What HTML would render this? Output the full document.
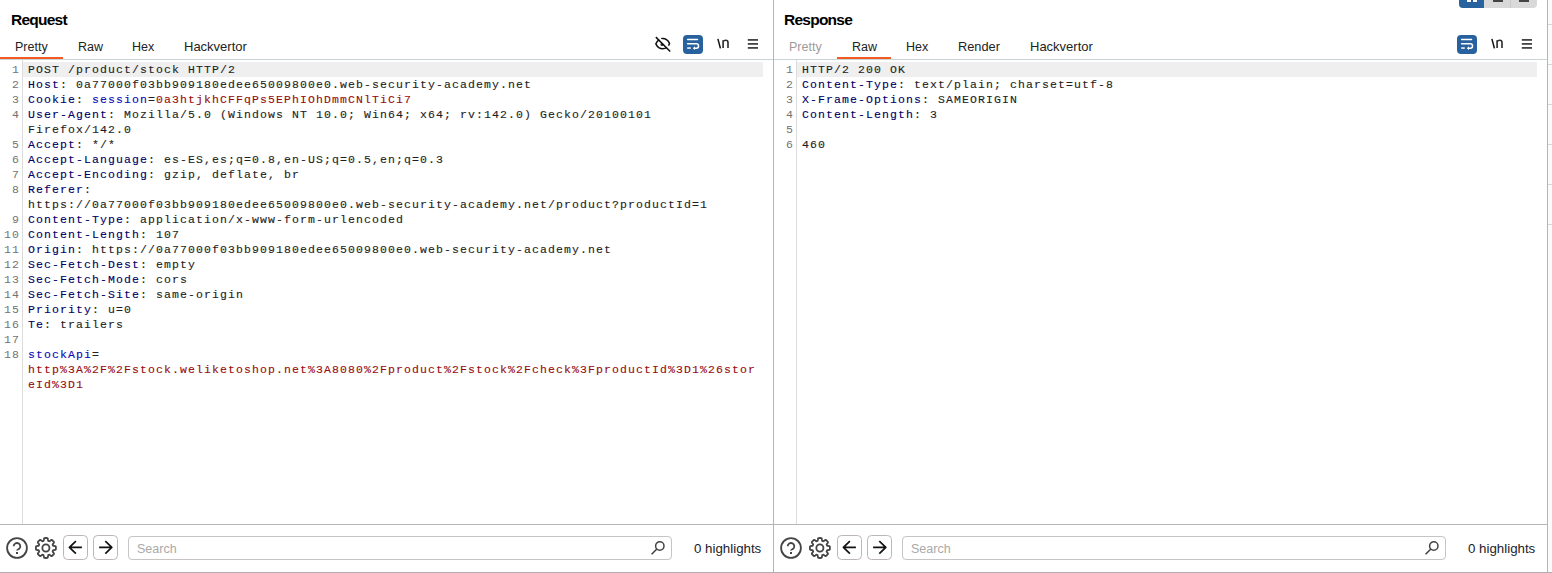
<!DOCTYPE html>
<html><head><meta charset="utf-8">
<style>
*{margin:0;padding:0;box-sizing:border-box}
html,body{width:1552px;height:573px;overflow:hidden;background:#fff}
body{position:relative;font-family:"Liberation Sans",sans-serif;color:#222}
.a{position:absolute}
.title{font-weight:bold;font-size:15.5px;letter-spacing:-0.75px;color:#000;line-height:16px;white-space:nowrap}
.tab{font-size:12.5px;line-height:16px;margin-top:1px;color:#222;white-space:nowrap}
.ul{background:#f25a23;height:2px;top:57px}
.hb{background:#ccd3d6;height:1px;top:59px}
.vl{background:#b9b4b4;width:1px}
.ed{font-family:"Liberation Mono",monospace;font-size:11.5px;letter-spacing:1.1px;line-height:15px;margin-top:0px;-webkit-text-stroke:0.12px currentColor;white-space:pre}
.ln{font-family:"Liberation Mono",monospace;font-size:11.5px;letter-spacing:1.1px;line-height:15px;color:#727272;text-align:right;width:30px}
.n{color:#000068}
.k{color:#0808b8}
.r{color:#980d0d}
.v{color:#1e1e1e}
.hl{background:#efefef;height:15px}
.srch{font-size:12.5px;line-height:16px;color:#a9a9a9;white-space:nowrap}
.hlt{font-size:13.3px;line-height:16px;color:#1c1c28;white-space:nowrap}
</style></head><body>

<!-- ============ LEFT PANEL (Request) ============ -->
<div class="a title" style="left:11px;top:12px">Request</div>
<div class="a tab" style="left:15px;top:38px">Pretty</div>
<div class="a tab" style="left:78px;top:38px">Raw</div>
<div class="a tab" style="left:132px;top:38px">Hex</div>
<div class="a tab" style="left:184px;top:38px;font-size:13px">Hackvertor</div>
<div class="a ul" style="left:0;width:63px"></div>
<div class="a hb" style="left:0;width:773px"></div>
<!-- header icons request -->
<svg class="a" style="left:650px;top:32px" width="26" height="24" viewBox="0 0 26 24">
  <path d="M5.84 11.9 C7.5 8.4 10 6.54 12.7 6.54 C15.6 6.54 18.2 8.5 19.6 11.6 C18.3 14.9 15.7 16.84 12.7 16.84 C9.8 16.84 7.4 15.1 5.84 11.9 Z" fill="none" stroke="#111" stroke-width="1.5" stroke-linejoin="round"/>
  <circle cx="12.1" cy="12.4" r="1.6" fill="#2a2a2a"/>
  <line x1="7.04" y1="3.94" x2="21.5" y2="18.4" stroke="#fff" stroke-width="2.2"/>
  <line x1="5.84" y1="5.14" x2="20.2" y2="19.5" stroke="#111" stroke-width="1.5"/>
</svg>
<svg class="a" style="left:683px;top:35px" width="20" height="19" viewBox="0 0 20 19">
  <rect x="0" y="0" width="20" height="19" rx="4" fill="#28629e"/>
  <path d="M4.6 4.5 H14.5" stroke="#fff" stroke-width="1.5" stroke-linecap="round"/>
  <path d="M4.6 8.85 H13.4 A2.15 2.15 0 0 1 13.4 13.15 H11.6" fill="none" stroke="#fff" stroke-width="1.5" stroke-linecap="round"/>
  <path d="M9.8 13.15 L12 11.2 V15.1 Z" fill="#fff"/>
  <path d="M4.2 13.05 H7.8" stroke="#fff" stroke-width="1.5"/>
</svg>
<svg class="a" style="left:714px;top:35px" width="18" height="18" viewBox="0 0 18 18">
  <path d="M3.9 3.9 L6.4 13.4" stroke="#111" stroke-width="1.5" fill="none"/>
  <path d="M9.1 13 V5.2 M9.1 6.6 C9.6 5.6 10.6 5.2 11.7 5.2 C13.3 5.2 14 6 14 7.4 V13" stroke="#2a2a2a" stroke-width="1.6" fill="none"/>
</svg>
<svg class="a" style="left:747px;top:37px" width="12" height="13" viewBox="0 0 12 13">
  <rect x="0.8" y="2" width="10.2" height="1.8" fill="#454545"/>
  <rect x="0.8" y="6" width="10.2" height="1.8" fill="#454545"/>
  <rect x="0.8" y="10" width="10.2" height="1.8" fill="#454545"/>
</svg>


<!-- editor -->
<div class="a vl" style="left:22px;top:60px;height:464px;background:#dcdcdc"></div>
<div class="a hl" style="left:23px;top:62px;width:740px"></div>
<div class="a ln" style="left:-10px;top:62px">1</div>
<div class="a ln" style="left:-10px;top:77px">2</div>
<div class="a ln" style="left:-10px;top:92px">3</div>
<div class="a ln" style="left:-10px;top:107px">4</div>
<div class="a ln" style="left:-10px;top:137px">5</div>
<div class="a ln" style="left:-10px;top:152px">6</div>
<div class="a ln" style="left:-10px;top:167px">7</div>
<div class="a ln" style="left:-10px;top:182px">8</div>
<div class="a ln" style="left:-10px;top:212px">9</div>
<div class="a ln" style="left:-10px;top:227px">10</div>
<div class="a ln" style="left:-10px;top:242px">11</div>
<div class="a ln" style="left:-10px;top:257px">12</div>
<div class="a ln" style="left:-10px;top:272px">13</div>
<div class="a ln" style="left:-10px;top:287px">14</div>
<div class="a ln" style="left:-10px;top:302px">15</div>
<div class="a ln" style="left:-10px;top:317px">16</div>
<div class="a ln" style="left:-10px;top:332px">17</div>
<div class="a ln" style="left:-10px;top:347px">18</div>
<div class="a ed" style="left:28px;top:62px"><span class="v">POST /product/stock HTTP/2</span></div>
<div class="a ed" style="left:28px;top:77px"><span class="n">Host</span>: <span class="v">0a77000f03bb909180edee65009800e0.web-security-academy.net</span></div>
<div class="a ed" style="left:28px;top:92px"><span class="n">Cookie</span>: <span class="k">session</span>=<span class="r">0a3htjkhCFFqPs5EPhIOhDmmCNlTiCi7</span></div>
<div class="a ed" style="left:28px;top:107px"><span class="n">User-Agent</span>: <span class="v">Mozilla/5.0 (Windows NT 10.0; Win64; x64; rv:142.0) Gecko/20100101</span></div>
<div class="a ed" style="left:28px;top:122px"><span class="v">Firefox/142.0</span></div>
<div class="a ed" style="left:28px;top:137px"><span class="n">Accept</span>: <span class="v">*/*</span></div>
<div class="a ed" style="left:28px;top:152px"><span class="n">Accept-Language</span>: <span class="v">es-ES,es;q=0.8,en-US;q=0.5,en;q=0.3</span></div>
<div class="a ed" style="left:28px;top:167px"><span class="n">Accept-Encoding</span>: <span class="v">gzip, deflate, br</span></div>
<div class="a ed" style="left:28px;top:182px"><span class="n">Referer</span>:</div>
<div class="a ed" style="left:28px;top:197px"><span class="v">https://0a77000f03bb909180edee65009800e0.web-security-academy.net/product?productId=1</span></div>
<div class="a ed" style="left:28px;top:212px"><span class="n">Content-Type</span>: <span class="v">application/x-www-form-urlencoded</span></div>
<div class="a ed" style="left:28px;top:227px"><span class="n">Content-Length</span>: <span class="v">107</span></div>
<div class="a ed" style="left:28px;top:242px"><span class="n">Origin</span>: <span class="v">https://0a77000f03bb909180edee65009800e0.web-security-academy.net</span></div>
<div class="a ed" style="left:28px;top:257px"><span class="n">Sec-Fetch-Dest</span>: <span class="v">empty</span></div>
<div class="a ed" style="left:28px;top:272px"><span class="n">Sec-Fetch-Mode</span>: <span class="v">cors</span></div>
<div class="a ed" style="left:28px;top:287px"><span class="n">Sec-Fetch-Site</span>: <span class="v">same-origin</span></div>
<div class="a ed" style="left:28px;top:302px"><span class="n">Priority</span>: <span class="v">u=0</span></div>
<div class="a ed" style="left:28px;top:317px"><span class="n">Te</span>: <span class="v">trailers</span></div>
<div class="a ed" style="left:28px;top:347px"><span class="k">stockApi</span>=</div>
<div class="a ed" style="left:28px;top:362px"><span class="r">http%3A%2F%2Fstock.weliketoshop.net%3A8080%2Fproduct%2Fstock%2Fcheck%3FproductId%3D1%26stor</span></div>
<div class="a ed" style="left:28px;top:377px"><span class="r">eId%3D1</span></div>

<!-- divider -->
<div class="a vl" style="left:773px;top:0;height:573px"></div>

<!-- ============ RIGHT PANEL (Response) ============ -->
<div class="a title" style="left:784px;top:12px">Response</div>
<div class="a tab" style="left:789px;top:38px;color:#a09a9a">Pretty</div>
<div class="a tab" style="left:852px;top:38px">Raw</div>
<div class="a tab" style="left:906px;top:38px">Hex</div>
<div class="a tab" style="left:958px;top:38px;font-size:12.8px">Render</div>
<div class="a tab" style="left:1030px;top:38px;font-size:13px">Hackvertor</div>
<div class="a ul" style="left:837px;width:54px"></div>
<div class="a hb" style="left:774px;width:773px"></div>
<!-- header icons response -->
<svg class="a" style="left:1457px;top:35px" width="20" height="19" viewBox="0 0 20 19">
  <rect x="0" y="0" width="20" height="19" rx="4" fill="#28629e"/>
  <path d="M4.6 4.5 H14.5" stroke="#fff" stroke-width="1.5" stroke-linecap="round"/>
  <path d="M4.6 8.85 H13.4 A2.15 2.15 0 0 1 13.4 13.15 H11.6" fill="none" stroke="#fff" stroke-width="1.5" stroke-linecap="round"/>
  <path d="M9.8 13.15 L12 11.2 V15.1 Z" fill="#fff"/>
  <path d="M4.2 13.05 H7.8" stroke="#fff" stroke-width="1.5"/>
</svg>
<svg class="a" style="left:1488px;top:35px" width="18" height="18" viewBox="0 0 18 18">
  <path d="M3.9 3.9 L6.4 13.4" stroke="#111" stroke-width="1.5" fill="none"/>
  <path d="M9.1 13 V5.2 M9.1 6.6 C9.6 5.6 10.6 5.2 11.7 5.2 C13.3 5.2 14 6 14 7.4 V13" stroke="#2a2a2a" stroke-width="1.6" fill="none"/>
</svg>
<svg class="a" style="left:1521px;top:37px" width="12" height="13" viewBox="0 0 12 13">
  <rect x="0.8" y="2" width="10.2" height="1.8" fill="#454545"/>
  <rect x="0.8" y="6" width="10.2" height="1.8" fill="#454545"/>
  <rect x="0.8" y="10" width="10.2" height="1.8" fill="#454545"/>
</svg>


<div class="a vl" style="left:796px;top:60px;height:464px;background:#dcdcdc"></div>
<div class="a hl" style="left:797px;top:62px;width:740px"></div>
<div class="a ln" style="left:764px;top:62px">1</div>
<div class="a ln" style="left:764px;top:77px">2</div>
<div class="a ln" style="left:764px;top:92px">3</div>
<div class="a ln" style="left:764px;top:107px">4</div>
<div class="a ln" style="left:764px;top:122px">5</div>
<div class="a ln" style="left:764px;top:137px">6</div>
<div class="a ed" style="left:802px;top:62px"><span class="v">HTTP/2 200 OK</span></div>
<div class="a ed" style="left:802px;top:77px"><span class="n">Content-Type</span>: <span class="v">text/plain; charset=utf-8</span></div>
<div class="a ed" style="left:802px;top:92px"><span class="n">X-Frame-Options</span>: <span class="v">SAMEORIGIN</span></div>
<div class="a ed" style="left:802px;top:107px"><span class="n">Content-Length</span>: <span class="v">3</span></div>
<div class="a ed" style="left:802px;top:137px"><span class="v">460</span></div>


<!-- layout toggle group top right -->
<div class="a" style="left:1459px;top:-4px;width:78px;height:12px;border-radius:4px;background:#d9d9d9;overflow:hidden">
  <div class="a" style="left:0;top:0;width:25px;height:12px;background:#28639f"></div>
  <div class="a" style="left:51px;top:0;width:1px;height:12px;background:#cbcbcb"></div>
  <div class="a" style="left:8px;top:0;width:4px;height:6px;background:#fff"></div>
  <div class="a" style="left:14px;top:0;width:4px;height:6px;background:#fff"></div>
  <div class="a" style="left:34px;top:0;width:10px;height:6px;background:#444"></div>
  <div class="a" style="left:60px;top:0;width:10px;height:6px;background:#444"></div>
</div>
<!-- far right strip ticks -->
<div class="a" style="left:1548px;top:0;width:4px;height:573px;background:#fbfbfb"></div>
<div class="a" style="left:1548px;top:24px;width:4px;height:1px;background:#d8d8d8"></div>
<div class="a" style="left:1548px;top:64px;width:4px;height:1px;background:#d8d8d8"></div>
<div class="a" style="left:1548px;top:104px;width:4px;height:1px;background:#d8d8d8"></div>
<div class="a" style="left:1548px;top:144px;width:4px;height:1px;background:#d8d8d8"></div>
<div class="a" style="left:1548px;top:184px;width:4px;height:1px;background:#d8d8d8"></div>
<div class="a" style="left:1548px;top:224px;width:4px;height:1px;background:#d8d8d8"></div>
<!-- right edge -->
<div class="a vl" style="left:1547px;top:0;height:573px"></div>


<!-- bottom bar offset 0 -->
<svg class="a" style="left:0px;top:524px" width="130" height="48" viewBox="0 0 130 48">
  <circle cx="17" cy="24" r="9.9" fill="none" stroke="#444" stroke-width="1.8"/>
  <path d="M13.7 22.3 A3.3 3.3 0 1 1 18.9 25 C17.6 25.7 17 26 17 26.6" fill="none" stroke="#444" stroke-width="1.8" stroke-linecap="butt"/>
  <rect x="16" y="28" width="2" height="2" fill="#444"/>
  <g transform="translate(45.9 24)"><path d="M0.00 -10.00 L0.09 -10.00 L0.17 -10.00 L0.26 -10.00 L0.35 -9.99 L0.44 -9.99 L0.52 -9.99 L0.61 -9.98 L0.70 -9.98 L0.78 -9.97 L0.87 -9.96 L0.96 -9.95 L1.05 -9.95 L1.13 -9.94 L1.22 -9.93 L1.31 -9.91 L1.39 -9.90 L1.48 -9.89 L1.56 -9.86 L1.64 -9.80 L1.71 -9.71 L1.78 -9.60 L1.84 -9.46 L1.89 -9.29 L1.94 -9.11 L1.98 -8.92 L2.01 -8.72 L2.04 -8.51 L2.07 -8.30 L2.09 -8.10 L2.12 -7.90 L2.14 -7.72 L2.17 -7.56 L2.20 -7.42 L2.23 -7.30 L2.27 -7.21 L2.32 -7.15 L2.38 -7.11 L2.44 -7.09 L2.50 -7.07 L2.57 -7.05 L2.63 -7.03 L2.69 -7.00 L2.75 -6.98 L2.81 -6.95 L2.87 -6.93 L2.93 -6.90 L2.99 -6.88 L3.05 -6.85 L3.11 -6.82 L3.17 -6.80 L3.23 -6.77 L3.29 -6.74 L3.35 -6.71 L3.41 -6.70 L3.49 -6.71 L3.58 -6.74 L3.69 -6.80 L3.81 -6.88 L3.95 -6.98 L4.09 -7.09 L4.24 -7.21 L4.41 -7.33 L4.57 -7.46 L4.74 -7.59 L4.91 -7.71 L5.07 -7.81 L5.23 -7.91 L5.39 -7.99 L5.53 -8.04 L5.66 -8.08 L5.77 -8.09 L5.87 -8.08 L5.95 -8.04 L6.02 -7.99 L6.09 -7.93 L6.16 -7.88 L6.23 -7.83 L6.29 -7.77 L6.36 -7.72 L6.43 -7.66 L6.49 -7.60 L6.56 -7.55 L6.63 -7.49 L6.69 -7.43 L6.76 -7.37 L6.82 -7.31 L6.88 -7.25 L6.95 -7.19 L7.01 -7.13 L7.07 -7.07 L7.13 -7.01 L7.19 -6.95 L7.25 -6.88 L7.31 -6.82 L7.37 -6.76 L7.43 -6.69 L7.49 -6.63 L7.55 -6.56 L7.60 -6.49 L7.66 -6.43 L7.72 -6.36 L7.77 -6.29 L7.83 -6.23 L7.88 -6.16 L7.93 -6.09 L7.99 -6.02 L8.04 -5.95 L8.08 -5.87 L8.09 -5.77 L8.08 -5.66 L8.04 -5.53 L7.99 -5.39 L7.91 -5.23 L7.81 -5.07 L7.71 -4.91 L7.59 -4.74 L7.46 -4.57 L7.33 -4.41 L7.21 -4.24 L7.09 -4.09 L6.98 -3.95 L6.88 -3.81 L6.80 -3.69 L6.74 -3.58 L6.71 -3.49 L6.70 -3.41 L6.71 -3.35 L6.74 -3.29 L6.77 -3.23 L6.80 -3.17 L6.82 -3.11 L6.85 -3.05 L6.88 -2.99 L6.90 -2.93 L6.93 -2.87 L6.95 -2.81 L6.98 -2.75 L7.00 -2.69 L7.03 -2.63 L7.05 -2.57 L7.07 -2.50 L7.09 -2.44 L7.11 -2.38 L7.15 -2.32 L7.21 -2.27 L7.30 -2.23 L7.42 -2.20 L7.56 -2.17 L7.72 -2.14 L7.90 -2.12 L8.10 -2.09 L8.30 -2.07 L8.51 -2.04 L8.72 -2.01 L8.92 -1.98 L9.11 -1.94 L9.29 -1.89 L9.46 -1.84 L9.60 -1.78 L9.71 -1.71 L9.80 -1.64 L9.86 -1.56 L9.89 -1.48 L9.90 -1.39 L9.91 -1.31 L9.93 -1.22 L9.94 -1.13 L9.95 -1.05 L9.95 -0.96 L9.96 -0.87 L9.97 -0.78 L9.98 -0.70 L9.98 -0.61 L9.99 -0.52 L9.99 -0.44 L9.99 -0.35 L10.00 -0.26 L10.00 -0.17 L10.00 -0.09 L10.00 0.00 L10.00 0.09 L10.00 0.17 L10.00 0.26 L9.99 0.35 L9.99 0.44 L9.99 0.52 L9.98 0.61 L9.98 0.70 L9.97 0.78 L9.96 0.87 L9.95 0.96 L9.95 1.05 L9.94 1.13 L9.93 1.22 L9.91 1.31 L9.90 1.39 L9.89 1.48 L9.86 1.56 L9.80 1.64 L9.71 1.71 L9.60 1.78 L9.46 1.84 L9.29 1.89 L9.11 1.94 L8.92 1.98 L8.72 2.01 L8.51 2.04 L8.30 2.07 L8.10 2.09 L7.90 2.12 L7.72 2.14 L7.56 2.17 L7.42 2.20 L7.30 2.23 L7.21 2.27 L7.15 2.32 L7.11 2.38 L7.09 2.44 L7.07 2.50 L7.05 2.57 L7.03 2.63 L7.00 2.69 L6.98 2.75 L6.95 2.81 L6.93 2.87 L6.90 2.93 L6.88 2.99 L6.85 3.05 L6.82 3.11 L6.80 3.17 L6.77 3.23 L6.74 3.29 L6.71 3.35 L6.70 3.41 L6.71 3.49 L6.74 3.58 L6.80 3.69 L6.88 3.81 L6.98 3.95 L7.09 4.09 L7.21 4.24 L7.33 4.41 L7.46 4.57 L7.59 4.74 L7.71 4.91 L7.81 5.07 L7.91 5.23 L7.99 5.39 L8.04 5.53 L8.08 5.66 L8.09 5.77 L8.08 5.87 L8.04 5.95 L7.99 6.02 L7.93 6.09 L7.88 6.16 L7.83 6.23 L7.77 6.29 L7.72 6.36 L7.66 6.43 L7.60 6.49 L7.55 6.56 L7.49 6.63 L7.43 6.69 L7.37 6.76 L7.31 6.82 L7.25 6.88 L7.19 6.95 L7.13 7.01 L7.07 7.07 L7.01 7.13 L6.95 7.19 L6.88 7.25 L6.82 7.31 L6.76 7.37 L6.69 7.43 L6.63 7.49 L6.56 7.55 L6.49 7.60 L6.43 7.66 L6.36 7.72 L6.29 7.77 L6.23 7.83 L6.16 7.88 L6.09 7.93 L6.02 7.99 L5.95 8.04 L5.87 8.08 L5.77 8.09 L5.66 8.08 L5.53 8.04 L5.39 7.99 L5.23 7.91 L5.07 7.81 L4.91 7.71 L4.74 7.59 L4.57 7.46 L4.41 7.33 L4.24 7.21 L4.09 7.09 L3.95 6.98 L3.81 6.88 L3.69 6.80 L3.58 6.74 L3.49 6.71 L3.41 6.70 L3.35 6.71 L3.29 6.74 L3.23 6.77 L3.17 6.80 L3.11 6.82 L3.05 6.85 L2.99 6.88 L2.93 6.90 L2.87 6.93 L2.81 6.95 L2.75 6.98 L2.69 7.00 L2.63 7.03 L2.57 7.05 L2.50 7.07 L2.44 7.09 L2.38 7.11 L2.32 7.15 L2.27 7.21 L2.23 7.30 L2.20 7.42 L2.17 7.56 L2.14 7.72 L2.12 7.90 L2.09 8.10 L2.07 8.30 L2.04 8.51 L2.01 8.72 L1.98 8.92 L1.94 9.11 L1.89 9.29 L1.84 9.46 L1.78 9.60 L1.71 9.71 L1.64 9.80 L1.56 9.86 L1.48 9.89 L1.39 9.90 L1.31 9.91 L1.22 9.93 L1.13 9.94 L1.05 9.95 L0.96 9.95 L0.87 9.96 L0.78 9.97 L0.70 9.98 L0.61 9.98 L0.52 9.99 L0.44 9.99 L0.35 9.99 L0.26 10.00 L0.17 10.00 L0.09 10.00 L0.00 10.00 L-0.09 10.00 L-0.17 10.00 L-0.26 10.00 L-0.35 9.99 L-0.44 9.99 L-0.52 9.99 L-0.61 9.98 L-0.70 9.98 L-0.78 9.97 L-0.87 9.96 L-0.96 9.95 L-1.05 9.95 L-1.13 9.94 L-1.22 9.93 L-1.31 9.91 L-1.39 9.90 L-1.48 9.89 L-1.56 9.86 L-1.64 9.80 L-1.71 9.71 L-1.78 9.60 L-1.84 9.46 L-1.89 9.29 L-1.94 9.11 L-1.98 8.92 L-2.01 8.72 L-2.04 8.51 L-2.07 8.30 L-2.09 8.10 L-2.12 7.90 L-2.14 7.72 L-2.17 7.56 L-2.20 7.42 L-2.23 7.30 L-2.27 7.21 L-2.32 7.15 L-2.38 7.11 L-2.44 7.09 L-2.50 7.07 L-2.57 7.05 L-2.63 7.03 L-2.69 7.00 L-2.75 6.98 L-2.81 6.95 L-2.87 6.93 L-2.93 6.90 L-2.99 6.88 L-3.05 6.85 L-3.11 6.82 L-3.17 6.80 L-3.23 6.77 L-3.29 6.74 L-3.35 6.71 L-3.41 6.70 L-3.49 6.71 L-3.58 6.74 L-3.69 6.80 L-3.81 6.88 L-3.95 6.98 L-4.09 7.09 L-4.24 7.21 L-4.41 7.33 L-4.57 7.46 L-4.74 7.59 L-4.91 7.71 L-5.07 7.81 L-5.23 7.91 L-5.39 7.99 L-5.53 8.04 L-5.66 8.08 L-5.77 8.09 L-5.87 8.08 L-5.95 8.04 L-6.02 7.99 L-6.09 7.93 L-6.16 7.88 L-6.23 7.83 L-6.29 7.77 L-6.36 7.72 L-6.43 7.66 L-6.49 7.60 L-6.56 7.55 L-6.63 7.49 L-6.69 7.43 L-6.76 7.37 L-6.82 7.31 L-6.88 7.25 L-6.95 7.19 L-7.01 7.13 L-7.07 7.07 L-7.13 7.01 L-7.19 6.95 L-7.25 6.88 L-7.31 6.82 L-7.37 6.76 L-7.43 6.69 L-7.49 6.63 L-7.55 6.56 L-7.60 6.49 L-7.66 6.43 L-7.72 6.36 L-7.77 6.29 L-7.83 6.23 L-7.88 6.16 L-7.93 6.09 L-7.99 6.02 L-8.04 5.95 L-8.08 5.87 L-8.09 5.77 L-8.08 5.66 L-8.04 5.53 L-7.99 5.39 L-7.91 5.23 L-7.81 5.07 L-7.71 4.91 L-7.59 4.74 L-7.46 4.57 L-7.33 4.41 L-7.21 4.24 L-7.09 4.09 L-6.98 3.95 L-6.88 3.81 L-6.80 3.69 L-6.74 3.58 L-6.71 3.49 L-6.70 3.41 L-6.71 3.35 L-6.74 3.29 L-6.77 3.23 L-6.80 3.17 L-6.82 3.11 L-6.85 3.05 L-6.88 2.99 L-6.90 2.93 L-6.93 2.87 L-6.95 2.81 L-6.98 2.75 L-7.00 2.69 L-7.03 2.63 L-7.05 2.57 L-7.07 2.50 L-7.09 2.44 L-7.11 2.38 L-7.15 2.32 L-7.21 2.27 L-7.30 2.23 L-7.42 2.20 L-7.56 2.17 L-7.72 2.14 L-7.90 2.12 L-8.10 2.09 L-8.30 2.07 L-8.51 2.04 L-8.72 2.01 L-8.92 1.98 L-9.11 1.94 L-9.29 1.89 L-9.46 1.84 L-9.60 1.78 L-9.71 1.71 L-9.80 1.64 L-9.86 1.56 L-9.89 1.48 L-9.90 1.39 L-9.91 1.31 L-9.93 1.22 L-9.94 1.13 L-9.95 1.05 L-9.95 0.96 L-9.96 0.87 L-9.97 0.78 L-9.98 0.70 L-9.98 0.61 L-9.99 0.52 L-9.99 0.44 L-9.99 0.35 L-10.00 0.26 L-10.00 0.17 L-10.00 0.09 L-10.00 0.00 L-10.00 -0.09 L-10.00 -0.17 L-10.00 -0.26 L-9.99 -0.35 L-9.99 -0.44 L-9.99 -0.52 L-9.98 -0.61 L-9.98 -0.70 L-9.97 -0.78 L-9.96 -0.87 L-9.95 -0.96 L-9.95 -1.05 L-9.94 -1.13 L-9.93 -1.22 L-9.91 -1.31 L-9.90 -1.39 L-9.89 -1.48 L-9.86 -1.56 L-9.80 -1.64 L-9.71 -1.71 L-9.60 -1.78 L-9.46 -1.84 L-9.29 -1.89 L-9.11 -1.94 L-8.92 -1.98 L-8.72 -2.01 L-8.51 -2.04 L-8.30 -2.07 L-8.10 -2.09 L-7.90 -2.12 L-7.72 -2.14 L-7.56 -2.17 L-7.42 -2.20 L-7.30 -2.23 L-7.21 -2.27 L-7.15 -2.32 L-7.11 -2.38 L-7.09 -2.44 L-7.07 -2.50 L-7.05 -2.57 L-7.03 -2.63 L-7.00 -2.69 L-6.98 -2.75 L-6.95 -2.81 L-6.93 -2.87 L-6.90 -2.93 L-6.88 -2.99 L-6.85 -3.05 L-6.82 -3.11 L-6.80 -3.17 L-6.77 -3.23 L-6.74 -3.29 L-6.71 -3.35 L-6.70 -3.41 L-6.71 -3.49 L-6.74 -3.58 L-6.80 -3.69 L-6.88 -3.81 L-6.98 -3.95 L-7.09 -4.09 L-7.21 -4.24 L-7.33 -4.41 L-7.46 -4.57 L-7.59 -4.74 L-7.71 -4.91 L-7.81 -5.07 L-7.91 -5.23 L-7.99 -5.39 L-8.04 -5.53 L-8.08 -5.66 L-8.09 -5.77 L-8.08 -5.87 L-8.04 -5.95 L-7.99 -6.02 L-7.93 -6.09 L-7.88 -6.16 L-7.83 -6.23 L-7.77 -6.29 L-7.72 -6.36 L-7.66 -6.43 L-7.60 -6.49 L-7.55 -6.56 L-7.49 -6.63 L-7.43 -6.69 L-7.37 -6.76 L-7.31 -6.82 L-7.25 -6.88 L-7.19 -6.95 L-7.13 -7.01 L-7.07 -7.07 L-7.01 -7.13 L-6.95 -7.19 L-6.88 -7.25 L-6.82 -7.31 L-6.76 -7.37 L-6.69 -7.43 L-6.63 -7.49 L-6.56 -7.55 L-6.49 -7.60 L-6.43 -7.66 L-6.36 -7.72 L-6.29 -7.77 L-6.23 -7.83 L-6.16 -7.88 L-6.09 -7.93 L-6.02 -7.99 L-5.95 -8.04 L-5.87 -8.08 L-5.77 -8.09 L-5.66 -8.08 L-5.53 -8.04 L-5.39 -7.99 L-5.23 -7.91 L-5.07 -7.81 L-4.91 -7.71 L-4.74 -7.59 L-4.57 -7.46 L-4.41 -7.33 L-4.24 -7.21 L-4.09 -7.09 L-3.95 -6.98 L-3.81 -6.88 L-3.69 -6.80 L-3.58 -6.74 L-3.49 -6.71 L-3.41 -6.70 L-3.35 -6.71 L-3.29 -6.74 L-3.23 -6.77 L-3.17 -6.80 L-3.11 -6.82 L-3.05 -6.85 L-2.99 -6.88 L-2.93 -6.90 L-2.87 -6.93 L-2.81 -6.95 L-2.75 -6.98 L-2.69 -7.00 L-2.63 -7.03 L-2.57 -7.05 L-2.50 -7.07 L-2.44 -7.09 L-2.38 -7.11 L-2.32 -7.15 L-2.27 -7.21 L-2.23 -7.30 L-2.20 -7.42 L-2.17 -7.56 L-2.14 -7.72 L-2.12 -7.90 L-2.09 -8.10 L-2.07 -8.30 L-2.04 -8.51 L-2.01 -8.72 L-1.98 -8.92 L-1.94 -9.11 L-1.89 -9.29 L-1.84 -9.46 L-1.78 -9.60 L-1.71 -9.71 L-1.64 -9.80 L-1.56 -9.86 L-1.48 -9.89 L-1.39 -9.90 L-1.31 -9.91 L-1.22 -9.93 L-1.13 -9.94 L-1.05 -9.95 L-0.96 -9.95 L-0.87 -9.96 L-0.78 -9.97 L-0.70 -9.98 L-0.61 -9.98 L-0.52 -9.99 L-0.44 -9.99 L-0.35 -9.99 L-0.26 -10.00 L-0.17 -10.00 L-0.09 -10.00 Z" fill="none" stroke="#444" stroke-width="1.8" stroke-linejoin="round"/>
  <circle cx="0" cy="0" r="3.55" fill="none" stroke="#444" stroke-width="1.8"/></g>
  <rect x="63.5" y="11.5" width="24" height="24" rx="4" fill="#fff" stroke="#bdb6b6" stroke-width="1"/>
  <path d="M69.4 23.4 H81.9 M75.9 17.2 L69.4 23.4 L75.9 29.6" fill="none" stroke="#111" stroke-width="1.7" stroke-linejoin="round"/>
  <rect x="93.5" y="11.5" width="24" height="24" rx="4" fill="#fff" stroke="#bdb6b6" stroke-width="1"/>
  <path d="M99.1 23.4 H111.8 M105.3 17.2 L111.8 23.4 L105.3 29.6" fill="none" stroke="#111" stroke-width="1.7" stroke-linejoin="round"/>
</svg>
<div class="a" style="left:128px;top:536px;width:544px;height:24px;border:1px solid #c6c4c4;border-radius:4px;background:#fff"></div>
<div class="a srch" style="left:137px;top:541px">Search</div>
<svg class="a" style="left:648px;top:538px" width="20" height="20" viewBox="0 0 20 20">
  <circle cx="11.8" cy="8" r="4.2" fill="none" stroke="#444" stroke-width="1.5"/>
  <path d="M8.9 11 L3.6 16.3" stroke="#444" stroke-width="1.6"/>
</svg>
<div class="a hlt" style="left:694px;top:541px">0 highlights</div>

<!-- bottom bar offset 774 -->
<svg class="a" style="left:774px;top:524px" width="130" height="48" viewBox="0 0 130 48">
  <circle cx="17" cy="24" r="9.9" fill="none" stroke="#444" stroke-width="1.8"/>
  <path d="M13.7 22.3 A3.3 3.3 0 1 1 18.9 25 C17.6 25.7 17 26 17 26.6" fill="none" stroke="#444" stroke-width="1.8" stroke-linecap="butt"/>
  <rect x="16" y="28" width="2" height="2" fill="#444"/>
  <g transform="translate(45.9 24)"><path d="M0.00 -10.00 L0.09 -10.00 L0.17 -10.00 L0.26 -10.00 L0.35 -9.99 L0.44 -9.99 L0.52 -9.99 L0.61 -9.98 L0.70 -9.98 L0.78 -9.97 L0.87 -9.96 L0.96 -9.95 L1.05 -9.95 L1.13 -9.94 L1.22 -9.93 L1.31 -9.91 L1.39 -9.90 L1.48 -9.89 L1.56 -9.86 L1.64 -9.80 L1.71 -9.71 L1.78 -9.60 L1.84 -9.46 L1.89 -9.29 L1.94 -9.11 L1.98 -8.92 L2.01 -8.72 L2.04 -8.51 L2.07 -8.30 L2.09 -8.10 L2.12 -7.90 L2.14 -7.72 L2.17 -7.56 L2.20 -7.42 L2.23 -7.30 L2.27 -7.21 L2.32 -7.15 L2.38 -7.11 L2.44 -7.09 L2.50 -7.07 L2.57 -7.05 L2.63 -7.03 L2.69 -7.00 L2.75 -6.98 L2.81 -6.95 L2.87 -6.93 L2.93 -6.90 L2.99 -6.88 L3.05 -6.85 L3.11 -6.82 L3.17 -6.80 L3.23 -6.77 L3.29 -6.74 L3.35 -6.71 L3.41 -6.70 L3.49 -6.71 L3.58 -6.74 L3.69 -6.80 L3.81 -6.88 L3.95 -6.98 L4.09 -7.09 L4.24 -7.21 L4.41 -7.33 L4.57 -7.46 L4.74 -7.59 L4.91 -7.71 L5.07 -7.81 L5.23 -7.91 L5.39 -7.99 L5.53 -8.04 L5.66 -8.08 L5.77 -8.09 L5.87 -8.08 L5.95 -8.04 L6.02 -7.99 L6.09 -7.93 L6.16 -7.88 L6.23 -7.83 L6.29 -7.77 L6.36 -7.72 L6.43 -7.66 L6.49 -7.60 L6.56 -7.55 L6.63 -7.49 L6.69 -7.43 L6.76 -7.37 L6.82 -7.31 L6.88 -7.25 L6.95 -7.19 L7.01 -7.13 L7.07 -7.07 L7.13 -7.01 L7.19 -6.95 L7.25 -6.88 L7.31 -6.82 L7.37 -6.76 L7.43 -6.69 L7.49 -6.63 L7.55 -6.56 L7.60 -6.49 L7.66 -6.43 L7.72 -6.36 L7.77 -6.29 L7.83 -6.23 L7.88 -6.16 L7.93 -6.09 L7.99 -6.02 L8.04 -5.95 L8.08 -5.87 L8.09 -5.77 L8.08 -5.66 L8.04 -5.53 L7.99 -5.39 L7.91 -5.23 L7.81 -5.07 L7.71 -4.91 L7.59 -4.74 L7.46 -4.57 L7.33 -4.41 L7.21 -4.24 L7.09 -4.09 L6.98 -3.95 L6.88 -3.81 L6.80 -3.69 L6.74 -3.58 L6.71 -3.49 L6.70 -3.41 L6.71 -3.35 L6.74 -3.29 L6.77 -3.23 L6.80 -3.17 L6.82 -3.11 L6.85 -3.05 L6.88 -2.99 L6.90 -2.93 L6.93 -2.87 L6.95 -2.81 L6.98 -2.75 L7.00 -2.69 L7.03 -2.63 L7.05 -2.57 L7.07 -2.50 L7.09 -2.44 L7.11 -2.38 L7.15 -2.32 L7.21 -2.27 L7.30 -2.23 L7.42 -2.20 L7.56 -2.17 L7.72 -2.14 L7.90 -2.12 L8.10 -2.09 L8.30 -2.07 L8.51 -2.04 L8.72 -2.01 L8.92 -1.98 L9.11 -1.94 L9.29 -1.89 L9.46 -1.84 L9.60 -1.78 L9.71 -1.71 L9.80 -1.64 L9.86 -1.56 L9.89 -1.48 L9.90 -1.39 L9.91 -1.31 L9.93 -1.22 L9.94 -1.13 L9.95 -1.05 L9.95 -0.96 L9.96 -0.87 L9.97 -0.78 L9.98 -0.70 L9.98 -0.61 L9.99 -0.52 L9.99 -0.44 L9.99 -0.35 L10.00 -0.26 L10.00 -0.17 L10.00 -0.09 L10.00 0.00 L10.00 0.09 L10.00 0.17 L10.00 0.26 L9.99 0.35 L9.99 0.44 L9.99 0.52 L9.98 0.61 L9.98 0.70 L9.97 0.78 L9.96 0.87 L9.95 0.96 L9.95 1.05 L9.94 1.13 L9.93 1.22 L9.91 1.31 L9.90 1.39 L9.89 1.48 L9.86 1.56 L9.80 1.64 L9.71 1.71 L9.60 1.78 L9.46 1.84 L9.29 1.89 L9.11 1.94 L8.92 1.98 L8.72 2.01 L8.51 2.04 L8.30 2.07 L8.10 2.09 L7.90 2.12 L7.72 2.14 L7.56 2.17 L7.42 2.20 L7.30 2.23 L7.21 2.27 L7.15 2.32 L7.11 2.38 L7.09 2.44 L7.07 2.50 L7.05 2.57 L7.03 2.63 L7.00 2.69 L6.98 2.75 L6.95 2.81 L6.93 2.87 L6.90 2.93 L6.88 2.99 L6.85 3.05 L6.82 3.11 L6.80 3.17 L6.77 3.23 L6.74 3.29 L6.71 3.35 L6.70 3.41 L6.71 3.49 L6.74 3.58 L6.80 3.69 L6.88 3.81 L6.98 3.95 L7.09 4.09 L7.21 4.24 L7.33 4.41 L7.46 4.57 L7.59 4.74 L7.71 4.91 L7.81 5.07 L7.91 5.23 L7.99 5.39 L8.04 5.53 L8.08 5.66 L8.09 5.77 L8.08 5.87 L8.04 5.95 L7.99 6.02 L7.93 6.09 L7.88 6.16 L7.83 6.23 L7.77 6.29 L7.72 6.36 L7.66 6.43 L7.60 6.49 L7.55 6.56 L7.49 6.63 L7.43 6.69 L7.37 6.76 L7.31 6.82 L7.25 6.88 L7.19 6.95 L7.13 7.01 L7.07 7.07 L7.01 7.13 L6.95 7.19 L6.88 7.25 L6.82 7.31 L6.76 7.37 L6.69 7.43 L6.63 7.49 L6.56 7.55 L6.49 7.60 L6.43 7.66 L6.36 7.72 L6.29 7.77 L6.23 7.83 L6.16 7.88 L6.09 7.93 L6.02 7.99 L5.95 8.04 L5.87 8.08 L5.77 8.09 L5.66 8.08 L5.53 8.04 L5.39 7.99 L5.23 7.91 L5.07 7.81 L4.91 7.71 L4.74 7.59 L4.57 7.46 L4.41 7.33 L4.24 7.21 L4.09 7.09 L3.95 6.98 L3.81 6.88 L3.69 6.80 L3.58 6.74 L3.49 6.71 L3.41 6.70 L3.35 6.71 L3.29 6.74 L3.23 6.77 L3.17 6.80 L3.11 6.82 L3.05 6.85 L2.99 6.88 L2.93 6.90 L2.87 6.93 L2.81 6.95 L2.75 6.98 L2.69 7.00 L2.63 7.03 L2.57 7.05 L2.50 7.07 L2.44 7.09 L2.38 7.11 L2.32 7.15 L2.27 7.21 L2.23 7.30 L2.20 7.42 L2.17 7.56 L2.14 7.72 L2.12 7.90 L2.09 8.10 L2.07 8.30 L2.04 8.51 L2.01 8.72 L1.98 8.92 L1.94 9.11 L1.89 9.29 L1.84 9.46 L1.78 9.60 L1.71 9.71 L1.64 9.80 L1.56 9.86 L1.48 9.89 L1.39 9.90 L1.31 9.91 L1.22 9.93 L1.13 9.94 L1.05 9.95 L0.96 9.95 L0.87 9.96 L0.78 9.97 L0.70 9.98 L0.61 9.98 L0.52 9.99 L0.44 9.99 L0.35 9.99 L0.26 10.00 L0.17 10.00 L0.09 10.00 L0.00 10.00 L-0.09 10.00 L-0.17 10.00 L-0.26 10.00 L-0.35 9.99 L-0.44 9.99 L-0.52 9.99 L-0.61 9.98 L-0.70 9.98 L-0.78 9.97 L-0.87 9.96 L-0.96 9.95 L-1.05 9.95 L-1.13 9.94 L-1.22 9.93 L-1.31 9.91 L-1.39 9.90 L-1.48 9.89 L-1.56 9.86 L-1.64 9.80 L-1.71 9.71 L-1.78 9.60 L-1.84 9.46 L-1.89 9.29 L-1.94 9.11 L-1.98 8.92 L-2.01 8.72 L-2.04 8.51 L-2.07 8.30 L-2.09 8.10 L-2.12 7.90 L-2.14 7.72 L-2.17 7.56 L-2.20 7.42 L-2.23 7.30 L-2.27 7.21 L-2.32 7.15 L-2.38 7.11 L-2.44 7.09 L-2.50 7.07 L-2.57 7.05 L-2.63 7.03 L-2.69 7.00 L-2.75 6.98 L-2.81 6.95 L-2.87 6.93 L-2.93 6.90 L-2.99 6.88 L-3.05 6.85 L-3.11 6.82 L-3.17 6.80 L-3.23 6.77 L-3.29 6.74 L-3.35 6.71 L-3.41 6.70 L-3.49 6.71 L-3.58 6.74 L-3.69 6.80 L-3.81 6.88 L-3.95 6.98 L-4.09 7.09 L-4.24 7.21 L-4.41 7.33 L-4.57 7.46 L-4.74 7.59 L-4.91 7.71 L-5.07 7.81 L-5.23 7.91 L-5.39 7.99 L-5.53 8.04 L-5.66 8.08 L-5.77 8.09 L-5.87 8.08 L-5.95 8.04 L-6.02 7.99 L-6.09 7.93 L-6.16 7.88 L-6.23 7.83 L-6.29 7.77 L-6.36 7.72 L-6.43 7.66 L-6.49 7.60 L-6.56 7.55 L-6.63 7.49 L-6.69 7.43 L-6.76 7.37 L-6.82 7.31 L-6.88 7.25 L-6.95 7.19 L-7.01 7.13 L-7.07 7.07 L-7.13 7.01 L-7.19 6.95 L-7.25 6.88 L-7.31 6.82 L-7.37 6.76 L-7.43 6.69 L-7.49 6.63 L-7.55 6.56 L-7.60 6.49 L-7.66 6.43 L-7.72 6.36 L-7.77 6.29 L-7.83 6.23 L-7.88 6.16 L-7.93 6.09 L-7.99 6.02 L-8.04 5.95 L-8.08 5.87 L-8.09 5.77 L-8.08 5.66 L-8.04 5.53 L-7.99 5.39 L-7.91 5.23 L-7.81 5.07 L-7.71 4.91 L-7.59 4.74 L-7.46 4.57 L-7.33 4.41 L-7.21 4.24 L-7.09 4.09 L-6.98 3.95 L-6.88 3.81 L-6.80 3.69 L-6.74 3.58 L-6.71 3.49 L-6.70 3.41 L-6.71 3.35 L-6.74 3.29 L-6.77 3.23 L-6.80 3.17 L-6.82 3.11 L-6.85 3.05 L-6.88 2.99 L-6.90 2.93 L-6.93 2.87 L-6.95 2.81 L-6.98 2.75 L-7.00 2.69 L-7.03 2.63 L-7.05 2.57 L-7.07 2.50 L-7.09 2.44 L-7.11 2.38 L-7.15 2.32 L-7.21 2.27 L-7.30 2.23 L-7.42 2.20 L-7.56 2.17 L-7.72 2.14 L-7.90 2.12 L-8.10 2.09 L-8.30 2.07 L-8.51 2.04 L-8.72 2.01 L-8.92 1.98 L-9.11 1.94 L-9.29 1.89 L-9.46 1.84 L-9.60 1.78 L-9.71 1.71 L-9.80 1.64 L-9.86 1.56 L-9.89 1.48 L-9.90 1.39 L-9.91 1.31 L-9.93 1.22 L-9.94 1.13 L-9.95 1.05 L-9.95 0.96 L-9.96 0.87 L-9.97 0.78 L-9.98 0.70 L-9.98 0.61 L-9.99 0.52 L-9.99 0.44 L-9.99 0.35 L-10.00 0.26 L-10.00 0.17 L-10.00 0.09 L-10.00 0.00 L-10.00 -0.09 L-10.00 -0.17 L-10.00 -0.26 L-9.99 -0.35 L-9.99 -0.44 L-9.99 -0.52 L-9.98 -0.61 L-9.98 -0.70 L-9.97 -0.78 L-9.96 -0.87 L-9.95 -0.96 L-9.95 -1.05 L-9.94 -1.13 L-9.93 -1.22 L-9.91 -1.31 L-9.90 -1.39 L-9.89 -1.48 L-9.86 -1.56 L-9.80 -1.64 L-9.71 -1.71 L-9.60 -1.78 L-9.46 -1.84 L-9.29 -1.89 L-9.11 -1.94 L-8.92 -1.98 L-8.72 -2.01 L-8.51 -2.04 L-8.30 -2.07 L-8.10 -2.09 L-7.90 -2.12 L-7.72 -2.14 L-7.56 -2.17 L-7.42 -2.20 L-7.30 -2.23 L-7.21 -2.27 L-7.15 -2.32 L-7.11 -2.38 L-7.09 -2.44 L-7.07 -2.50 L-7.05 -2.57 L-7.03 -2.63 L-7.00 -2.69 L-6.98 -2.75 L-6.95 -2.81 L-6.93 -2.87 L-6.90 -2.93 L-6.88 -2.99 L-6.85 -3.05 L-6.82 -3.11 L-6.80 -3.17 L-6.77 -3.23 L-6.74 -3.29 L-6.71 -3.35 L-6.70 -3.41 L-6.71 -3.49 L-6.74 -3.58 L-6.80 -3.69 L-6.88 -3.81 L-6.98 -3.95 L-7.09 -4.09 L-7.21 -4.24 L-7.33 -4.41 L-7.46 -4.57 L-7.59 -4.74 L-7.71 -4.91 L-7.81 -5.07 L-7.91 -5.23 L-7.99 -5.39 L-8.04 -5.53 L-8.08 -5.66 L-8.09 -5.77 L-8.08 -5.87 L-8.04 -5.95 L-7.99 -6.02 L-7.93 -6.09 L-7.88 -6.16 L-7.83 -6.23 L-7.77 -6.29 L-7.72 -6.36 L-7.66 -6.43 L-7.60 -6.49 L-7.55 -6.56 L-7.49 -6.63 L-7.43 -6.69 L-7.37 -6.76 L-7.31 -6.82 L-7.25 -6.88 L-7.19 -6.95 L-7.13 -7.01 L-7.07 -7.07 L-7.01 -7.13 L-6.95 -7.19 L-6.88 -7.25 L-6.82 -7.31 L-6.76 -7.37 L-6.69 -7.43 L-6.63 -7.49 L-6.56 -7.55 L-6.49 -7.60 L-6.43 -7.66 L-6.36 -7.72 L-6.29 -7.77 L-6.23 -7.83 L-6.16 -7.88 L-6.09 -7.93 L-6.02 -7.99 L-5.95 -8.04 L-5.87 -8.08 L-5.77 -8.09 L-5.66 -8.08 L-5.53 -8.04 L-5.39 -7.99 L-5.23 -7.91 L-5.07 -7.81 L-4.91 -7.71 L-4.74 -7.59 L-4.57 -7.46 L-4.41 -7.33 L-4.24 -7.21 L-4.09 -7.09 L-3.95 -6.98 L-3.81 -6.88 L-3.69 -6.80 L-3.58 -6.74 L-3.49 -6.71 L-3.41 -6.70 L-3.35 -6.71 L-3.29 -6.74 L-3.23 -6.77 L-3.17 -6.80 L-3.11 -6.82 L-3.05 -6.85 L-2.99 -6.88 L-2.93 -6.90 L-2.87 -6.93 L-2.81 -6.95 L-2.75 -6.98 L-2.69 -7.00 L-2.63 -7.03 L-2.57 -7.05 L-2.50 -7.07 L-2.44 -7.09 L-2.38 -7.11 L-2.32 -7.15 L-2.27 -7.21 L-2.23 -7.30 L-2.20 -7.42 L-2.17 -7.56 L-2.14 -7.72 L-2.12 -7.90 L-2.09 -8.10 L-2.07 -8.30 L-2.04 -8.51 L-2.01 -8.72 L-1.98 -8.92 L-1.94 -9.11 L-1.89 -9.29 L-1.84 -9.46 L-1.78 -9.60 L-1.71 -9.71 L-1.64 -9.80 L-1.56 -9.86 L-1.48 -9.89 L-1.39 -9.90 L-1.31 -9.91 L-1.22 -9.93 L-1.13 -9.94 L-1.05 -9.95 L-0.96 -9.95 L-0.87 -9.96 L-0.78 -9.97 L-0.70 -9.98 L-0.61 -9.98 L-0.52 -9.99 L-0.44 -9.99 L-0.35 -9.99 L-0.26 -10.00 L-0.17 -10.00 L-0.09 -10.00 Z" fill="none" stroke="#444" stroke-width="1.8" stroke-linejoin="round"/>
  <circle cx="0" cy="0" r="3.55" fill="none" stroke="#444" stroke-width="1.8"/></g>
  <rect x="63.5" y="11.5" width="24" height="24" rx="4" fill="#fff" stroke="#bdb6b6" stroke-width="1"/>
  <path d="M69.4 23.4 H81.9 M75.9 17.2 L69.4 23.4 L75.9 29.6" fill="none" stroke="#111" stroke-width="1.7" stroke-linejoin="round"/>
  <rect x="93.5" y="11.5" width="24" height="24" rx="4" fill="#fff" stroke="#bdb6b6" stroke-width="1"/>
  <path d="M99.1 23.4 H111.8 M105.3 17.2 L111.8 23.4 L105.3 29.6" fill="none" stroke="#111" stroke-width="1.7" stroke-linejoin="round"/>
</svg>
<div class="a" style="left:902px;top:536px;width:544px;height:24px;border:1px solid #c6c4c4;border-radius:4px;background:#fff"></div>
<div class="a srch" style="left:911px;top:541px">Search</div>
<svg class="a" style="left:1422px;top:538px" width="20" height="20" viewBox="0 0 20 20">
  <circle cx="11.8" cy="8" r="4.2" fill="none" stroke="#444" stroke-width="1.5"/>
  <path d="M8.9 11 L3.6 16.3" stroke="#444" stroke-width="1.6"/>
</svg>
<div class="a hlt" style="left:1468px;top:541px">0 highlights</div>
<!-- bottom bars -->
<div class="a" style="left:0;top:524px;width:1547px;height:1px;background:#bab5b5"></div>
<div class="a" style="left:0;top:572px;width:1552px;height:1px;background:#b3aeae"></div>

</body></html>
